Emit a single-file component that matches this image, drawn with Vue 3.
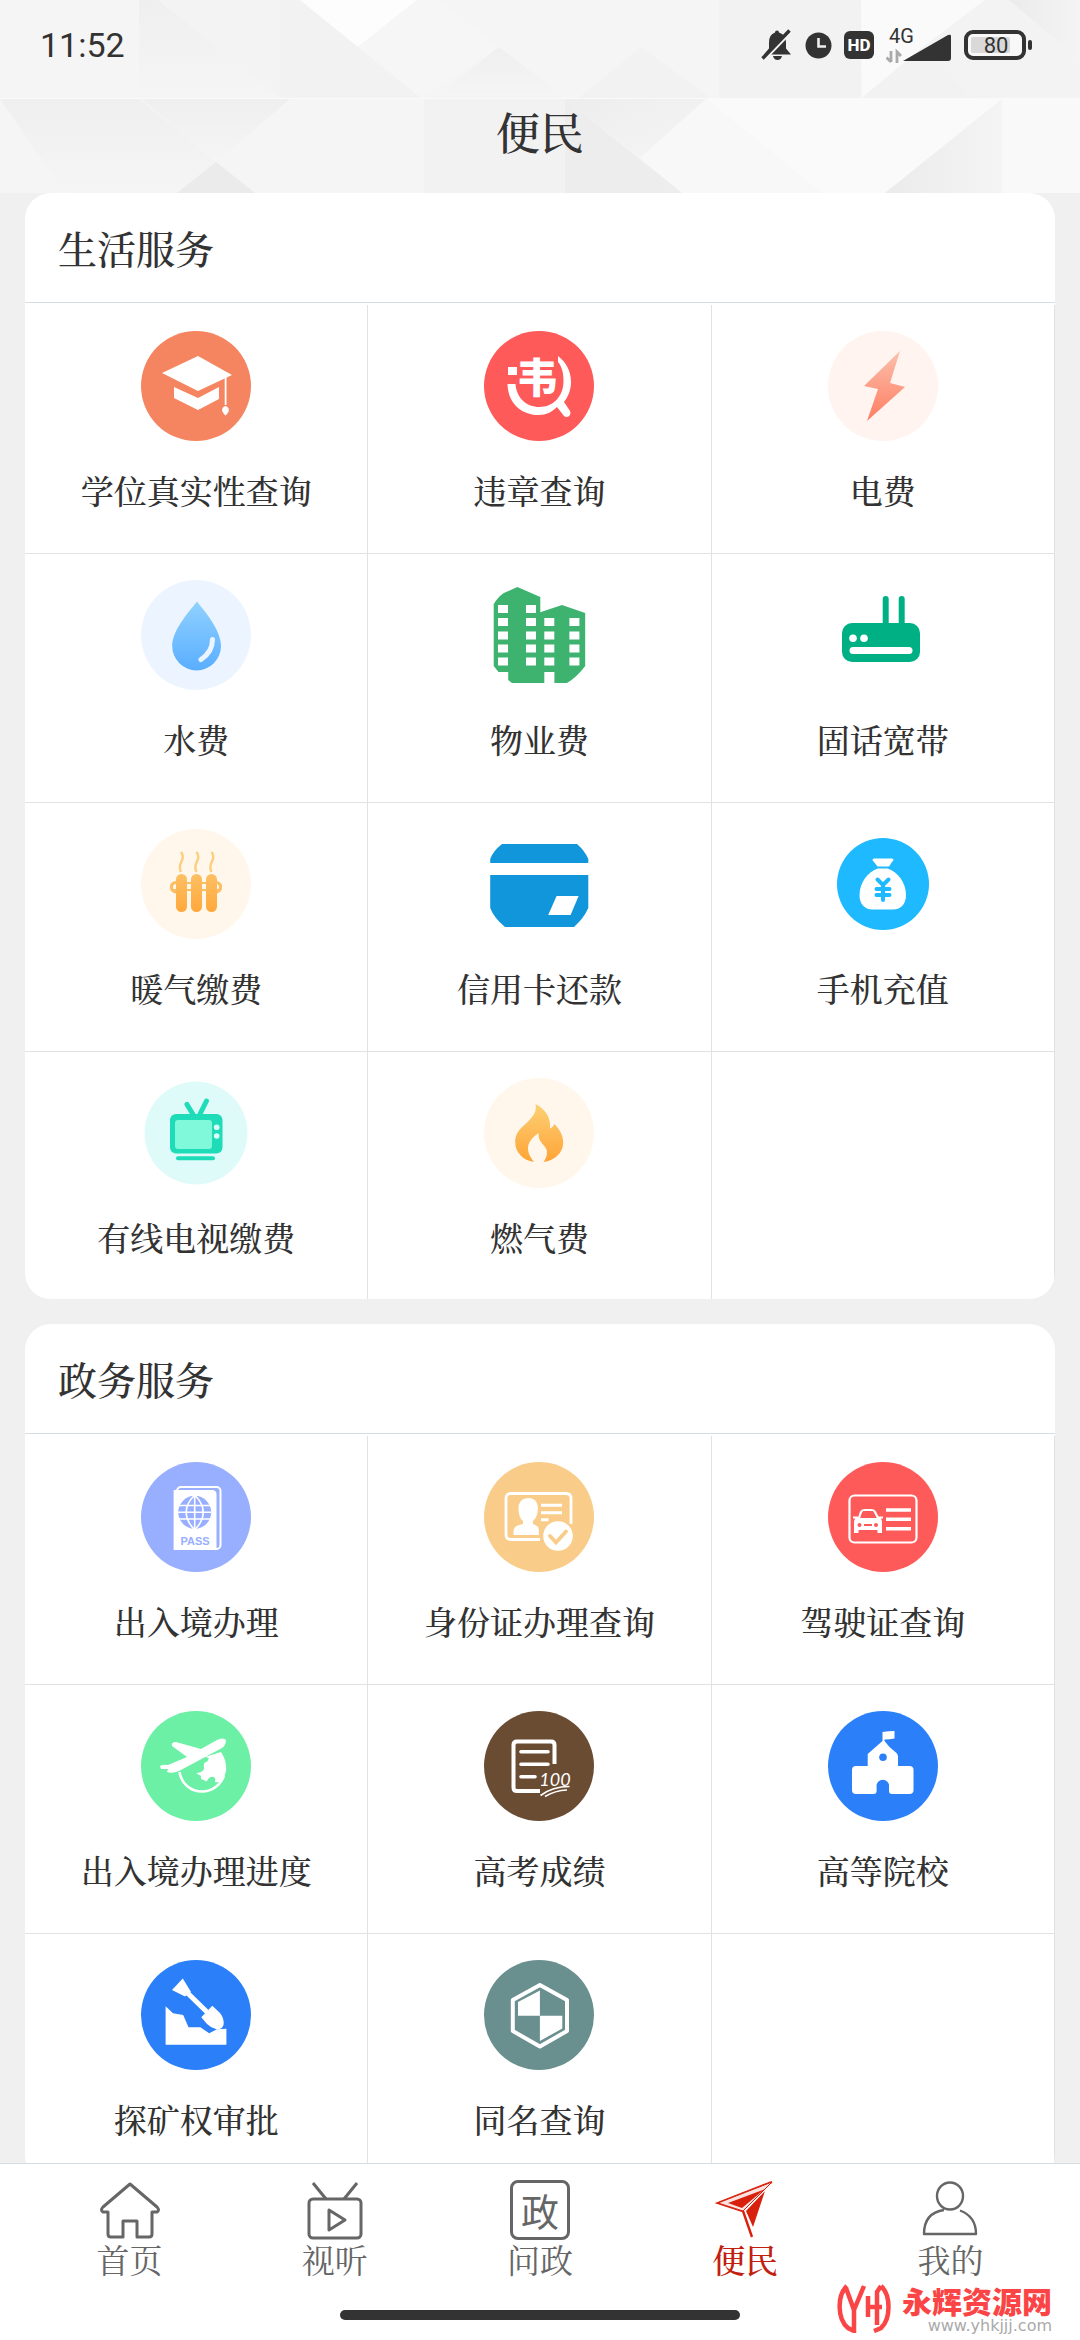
<script setup>
const icons = {
  degree: `<circle cx="55" cy="55" r="55" fill="#f58560"/><g fill="#fff"><path d="M57 25L91 44L57 60L21 42Z"/><path d="M33 56L57 67L78 56V68L57 79L33 67Z"/><path d="M83.700 45h1.800v29h-1.800z"/><path d="M84.500 75c5 2 4 6 0 9.500c-4-3.500-5-7.500 0-9.500z"/></g>`,
  traffic: `<circle cx="55" cy="55" r="55" fill="#ff5a5a"/><text x="53" y="62" text-anchor="middle" font-size="41" font-weight="900" fill="#fff" font-family="'Noto Sans CJK SC',sans-serif">韦</text><rect x="24" y="36" width="9" height="8" fill="#fff"/><path d="M23.500 53h8c1 14 11 23 24 23c14 0 24-11 24-26c0-9-2-15-5.500-19V25c8 6 13 15 13 26c0 8-3 15-7 20l6 9c2 4-3 8-6 5l-7-9c-5 5-11 8-18 8c-18 0-31-12-31.500-31z" fill="#fff"/>`,
  power: `<defs><linearGradient id="bolt" x2="0" y2="1"><stop stop-color="#fbc0ac"/><stop offset="1" stop-color="#ff7d63"/></linearGradient></defs><circle cx="55" cy="55" r="55" fill="#fff4ef"/><path d="M72 20L62 52L77 56L39 90L50 58L36 55Z" fill="url(#bolt)"/>`,
  water: `<defs><linearGradient id="drop" x2="0" y2="1"><stop stop-color="#90d1ff"/><stop offset="1" stop-color="#5aaeff"/></linearGradient></defs><circle cx="55" cy="55" r="55" fill="#ecf5ff"/><path d="M56 21.500C66 34 80 51 80 66a24.400 24.400 0 0 1-48.800 0C31.200 51 46 34 56 21.500z" fill="url(#drop)"/><path d="M71.500 59.500c0 9-4 15-11.500 20" fill="none" stroke="#ecf5ff" stroke-width="5" stroke-linecap="round"/>`,
  estate: `<path fill="#3eb370" d="M33.400 7L56.300 17V32.300L78 25L101.200 33V86Q93 97 83 103H70.400V92H60.300V103H28L24.200 100V92H14.500L9.700 86V24.300Q13 18 19.400 13.300z"/><g fill="#fff"><path d="M14 25h10v8H14zm0 13h10v8H14zm0 13.500h10v8H14zm0 13h10v8H14zm0 13h10v8H14zM42 25h10v8H42zm0 13h10v8H42zm0 13.500h10v8H42zm0 13h10v8H42zm0 13h10v8H42zM60.300 38h10v8h-10zm0 13.500h10v8h-10zm0 13h10v8h-10zm0 13h10v8h-10zM85.400 38h10v8h-10zm0 13.500h10v8h-10zm0 13h10v8h-10zm0 13h10v8h-10z"/></g>`,
  router: `<g fill="#00b085"><rect x="14" y="43" width="78" height="39" rx="10"/><rect x="54.700" y="16" width="6" height="32" rx="3"/><rect x="70.700" y="16" width="6" height="32" rx="3"/></g><g fill="#fff"><circle cx="25" cy="58.300" r="3.800"/><circle cx="36" cy="58.300" r="3.800"/><rect x="21.500" y="67" width="63" height="7" rx="3.500"/></g>`,
  heating: `<defs><linearGradient id="heat" x2="0" y2="1"><stop stop-color="#fdc063"/><stop offset="1" stop-color="#ffa83c"/></linearGradient></defs><circle cx="55" cy="55" r="55" fill="#fff7ec"/><rect x="30" y="54" width="50" height="7" rx="3.500" fill="none" stroke="#fdbd62" stroke-width="2"/><g fill="none" stroke="#fdbd62" stroke-width="3"><path d="M35 53.500c-6 0-6 9.500 0 9.500M75 53.500c6 0 6 9.500 0 9.500"/></g><g fill="url(#heat)"><rect x="35" y="45" width="11" height="38" rx="5.500"/><rect x="50" y="45" width="11" height="38" rx="5.500"/><rect x="65" y="45" width="11" height="38" rx="5.500"/></g><path d="M40 23c6 8-5 11 0 20M55.500 23c6 8-5 11 0 20M70.500 23c6 8-5 11 0 20" fill="none" stroke="#fbcf7f" stroke-width="2.500"/>`,
  card: `<g fill="#1296db"><path d="M18 15H93Q101 22 104.300 30V34H6.200V30Q9 22 18 15z"/><path d="M6.200 46H104.300V79Q100 89 90 98H21Q10 89 6.200 79z"/></g><path d="M72.600 67h22l-8 19h-22.400z" fill="#fff"/>`,
  recharge: `<circle cx="55" cy="55" r="46" fill="#1eb9ff"/><g fill="#fff"><path d="M46 29.500h18q3 1 0 3.500l-3 4.500H49.500l-3.500-4.500q-3-2.500 0-3.500z"/><path d="M50 39.500h9.500c10 3 18.500 14 18.500 26.500c0 10-6 14.500-13 14.500H44.500c-7 0-13-4.500-13-14.500c0-12.500 8.500-23.500 18.500-26.500z"/></g><path d="M49.500 50.500l5.500 5.500l5.500-5.500M55 56.500V71M48.500 60h13M48.500 66h13" fill="none" stroke="#1eb9ff" stroke-width="4" stroke-linecap="round"/>`,
  tv: `<circle cx="55" cy="55" r="51.500" fill="#dffbf9"/><path d="M46 26.500L53 38M65.500 23L58 38" stroke="#1fdcb9" stroke-width="5" stroke-linecap="round"/><rect x="29" y="36" width="52.500" height="39.500" rx="6" fill="#1fdcb9"/><rect x="34" y="42" width="37" height="29" rx="3" fill="#80f8da"/><g fill="#dffbf9"><circle cx="75.700" cy="49.300" r="2.800"/><circle cx="75.700" cy="58" r="2.800"/></g><rect x="35" y="78.300" width="39" height="4" rx="2" fill="#1fdcb9"/>`,
  gas: `<defs><linearGradient id="fire" x2="0" y2="1"><stop stop-color="#fcd075"/><stop offset="1" stop-color="#ffa437"/></linearGradient></defs><circle cx="55" cy="55" r="55" fill="#fff7ec"/><path d="M51.500 26C61 31 67 39 66 50.500C68 49.500 69.500 48 70.400 46C77 53 79.500 59 79.200 66C78.500 75 70 83 59.500 84C63 79 63.500 75 62.500 71.500C60 66 54 64 54.600 55.300C48 59 44 65 44 70.300C44 76 47 80 50 84C39 82.500 31 74 31.200 64C31 55 37 50 42.500 45C50 38 53 33 51.500 26z" fill="url(#fire)"/>`,
  passport: `<circle cx="55" cy="55" r="55" fill="#98aeff"/><rect x="36" y="25" width="43.500" height="62" rx="4" fill="none" stroke="#fff" stroke-width="2"/><path d="M32.600 28H71q4.500 0 4.500 4.500V88H32.600z" fill="#fff"/><circle cx="53.700" cy="50.300" r="16.500" fill="#98aeff"/><path d="M37 43.500h33M37 50.300h33M37 57h33M53.700 33v35M53.700 33q-17 17 0 35M53.700 33q17 17 0 35" fill="none" stroke="#fff" stroke-width="1.600"/><text x="54" y="82.500" text-anchor="middle" font-size="11" font-weight="700" fill="#98aeff" font-family="'Liberation Sans',sans-serif">PASS</text>`,
  idcard: `<circle cx="55" cy="55" r="55" fill="#f9cd89"/><path d="M56 77.500H27q-5 0-5-5V36.500q0-5 5-5H82q5 0 5 5V62" fill="none" stroke="#fff" stroke-width="2.800"/><g fill="#fff"><path d="M44.400 36c6 0 9.500 4 9.500 10c0 6-2 11-5 13v3c5 2 6 3 6 7v4H29.500c0-7 0-9 9.500-11v-3c-3-2-4.500-7-4.500-13c0-6 4-10 9.900-10z"/><circle cx="74" cy="74" r="14.800"/></g><path d="M57 43.300h21M57 50.700h21M57 57.700h7.500" stroke="#fff" stroke-width="3"/><path d="M66 74l6 6.500l10-11" fill="none" stroke="#f9cd89" stroke-width="3.800" stroke-linecap="round"/>`,
  license: `<circle cx="55" cy="55" r="55" fill="#ff5a5a"/><rect x="21.500" y="33.500" width="67" height="47" rx="5" fill="none" stroke="#fff" stroke-width="2.200"/><path d="M58 48h25M58 57.300h25M58 66.700h25" stroke="#fff" stroke-width="3.600"/><path d="M31 56l2-6q1-2 3-2h8q2 0 3 2l3 6" fill="none" stroke="#fff" stroke-width="2.200"/><path d="M25 54.500h5v1.500h20v-1.500h5v2h-2l1 3V71h-4.500v-3h-19v3H26V59.500l1-3h-2z" fill="#fff"/><g fill="#ff5a5a"><circle cx="31.500" cy="63" r="2"/><circle cx="48" cy="63" r="2"/><rect x="36" y="62" width="8" height="2"/></g>`,
  exit: `<circle cx="55" cy="55" r="55" fill="#6cf0a5"/><g fill="#fff"><path d="M20 58l-1-3q3-2 8-1l19-8L31 35q-1-4 4-4l25 7l16-9q6-3 9 0q0 5-4 8L38 60q-7 3-12 1l1-3z"/><path d="M80 41q6 9 5 19q-3 13-11 11q1-5-2-5q-2-1-5 2q-1 4-4 1q-4 0-3-4l-5-3q6 0 8-4q-1-8 3-7l2-4l-4-1z"/></g><path d="M38.500 61c2 12 11 19.500 23 19.500c9 0 18-6 21.500-16" fill="none" stroke="#fff" stroke-width="2.600"/>`,
  exam: `<circle cx="55" cy="55" r="55" fill="#6a4c33"/><path d="M56 80H33q-3.500 0-3.500-3.500V34q0-3.500 3.500-3.500h34q3.500 0 3.500 3.500V53" fill="none" stroke="#fff" stroke-width="4"/><path d="M37 40.700h27M37 53.300h27M37 65.700h14" stroke="#fff" stroke-width="3.600" stroke-linecap="round"/><text x="71" y="75" text-anchor="middle" font-size="18" font-style="italic" fill="#fff" font-family="Lato,sans-serif">100</text><path d="M56.500 84.500q12-9 29-9M61 85.500q10-6 22-6.500" fill="none" stroke="#fff" stroke-width="1.600"/>`,
  school: `<circle cx="55" cy="55" r="55" fill="#2b80fa"/><path fill="#fff" d="M54.500 21q6-1 12-1v7.500q-5 1-10 1V30l5 6l7 6q1.500 1.500 1.500 3.500v9.500h11.500q4 0 4 4v20q0 4-4 4H64q-3 0-3-3v-5a6.200 6.200 0 0 0-12.400 0v5q0 3-3 3H28q-4 0-4-4V59q0-4 4-4h11.700V43l14.800-13z"/><circle cx="55" cy="46.300" r="3.800" fill="#2b80fa"/>`,
  mining: `<circle cx="55" cy="55" r="55" fill="#2b80fa"/><g fill="#fff"><path d="M41.800 18.500L50 32L44 36.500L31 30z"/><path d="M71.300 45.700L79 53Q83 58 82.700 64Q82 69 76 69.500Q70 68 66 64L60.300 57.300z"/><path d="M24.600 46.300L32 53.300L42.200 55L47.500 67.300H59.400L68.200 73.300L76 69.300L85.400 68.700V84.700H24.600z"/></g><path d="M46 32.500L67 53" stroke="#fff" stroke-width="5"/>`,
  sameName: `<circle cx="55" cy="55" r="55" fill="#6a8f8f"/><path d="M55.900 25L83 40V71L55.900 86.500L28.800 71V40z" fill="none" stroke="#fff" stroke-width="4" stroke-linejoin="round"/><path d="M34 42L55.900 30.500V55.700H34zM55.900 55.700H78.300V68.500L55.900 81z" fill="#fff"/>`
}

const sections = [
  {
    title: '生活服务',
    items: [
      { name: '学位真实性查询', icon: 'degree' },
      { name: '违章查询', icon: 'traffic' },
      { name: '电费', icon: 'power' },
      { name: '水费', icon: 'water' },
      { name: '物业费', icon: 'estate' },
      { name: '固话宽带', icon: 'router' },
      { name: '暖气缴费', icon: 'heating' },
      { name: '信用卡还款', icon: 'card' },
      { name: '手机充值', icon: 'recharge' },
      { name: '有线电视缴费', icon: 'tv' },
      { name: '燃气费', icon: 'gas' }
    ]
  },
  {
    title: '政务服务',
    items: [
      { name: '出入境办理', icon: 'passport' },
      { name: '身份证办理查询', icon: 'idcard' },
      { name: '驾驶证查询', icon: 'license' },
      { name: '出入境办理进度', icon: 'exit' },
      { name: '高考成绩', icon: 'exam' },
      { name: '高等院校', icon: 'school' },
      { name: '探矿权审批', icon: 'mining' },
      { name: '同名查询', icon: 'sameName' }
    ]
  }
]
</script>

<template>
  <div class="app">
    <header class="header">
      <svg class="facets" viewBox="0 0 1080 193" preserveAspectRatio="none" aria-hidden="true">
        <defs>
          <linearGradient id="fade" x1="0" y1="0" x2="1" y2="1">
            <stop offset="0" stop-color="#ededed" /><stop offset="1" stop-color="#f5f5f5" />
          </linearGradient>
          <linearGradient id="rise" x1="0" y1="0" x2="0" y2="1">
            <stop offset="0" stop-color="#efefef" /><stop offset="1" stop-color="#f5f5f5" />
          </linearGradient>
          <linearGradient id="edge" x1="0" y1="0" x2="1" y2="0">
            <stop offset="0" stop-color="#ebebeb" /><stop offset="1" stop-color="#f4f4f4" />
          </linearGradient>
        </defs>
        <rect width="1080" height="193" fill="#f5f5f5" />
        <path d="M139 0H158L282 98H139z" fill="url(#rise)" />
        <path d="M158 0H281V98z" fill="#f3f3f3" />
        <path d="M281 0H300L421 98H281z" fill="#f2f2f2" />
        <path d="M300 0H417L358 47z" fill="#fdfdfd" />
        <path d="M417 0L358 47L421 98L499 47L440 0z" fill="#f6f6f6" />
        <path d="M499 47L565 98H434z" fill="url(#rise)" />
        <path d="M641 47L710 98H579z" fill="#f2f2f2" />
        <path d="M719 0H861V98H719z" fill="#f2f2f2" />
        <path d="M861 0H985L923 47L862 98z" fill="#fafafa" />
        <path d="M923 47L972 98H862z" fill="#f2f2f2" />
        <path d="M985 0H1009L1080 60V98H972L923 47z" fill="#f3f3f3" />
        <path d="M1009 0H1080V60z" fill="url(#edge)" />
        <path d="M0 99H139L255 193H65z" fill="url(#rise)" />
        <path d="M141 99H290L216 162z" fill="url(#rise)" />
        <path d="M216 162L255 193H177z" fill="#ebebeb" />
        <path d="M292 99H424V193H292z" fill="#f5f5f5" />
        <path d="M424 99H565V193H424z" fill="#f2f2f2" />
        <path d="M565 99L682 193H565z" fill="#ededed" />
        <path d="M565 99H706L640 158z" fill="url(#fade)" />
        <path d="M706 99H1002L885 193H822z" fill="#fafafa" />
        <path d="M706 99L822 193H682L640 158z" fill="#f8f8f8" />
        <path d="M1002 99V193H885z" fill="url(#edge)" />
        <path d="M1002 99H1080V193H1002z" fill="#f9f9f9" />
        <path d="M0 98.500H1080" stroke="#fafafa" />
      </svg>
      <div class="status">
        <time class="clock">11:52</time>
        <div class="indicators">
          <svg width="32" height="32" viewBox="0 0 32 32" aria-label="静音">
            <path d="M16 1.500q2 0 2 2q7 2 7 10v6l5 6H3l5-6v-6q0-8 6-10q0-2 2-2z" fill="#333" />
            <path d="M12 27h9q-1 4-4.500 4T12 27z" fill="#333" />
            <path d="M3 31L30 3" stroke="#f5f5f5" stroke-width="3" />
            <path d="M1.500 29.500L28.500 1.500" stroke="#333" stroke-width="3.500" />
          </svg>
          <svg width="27" height="27" viewBox="0 0 27 27" aria-label="闹钟">
            <circle cx="13.500" cy="13.500" r="13" fill="#333" />
            <path d="M13.500 6v8.500h7.500" fill="none" stroke="#eee" stroke-width="2.600" />
          </svg>
          <span class="hd">HD</span>
          <svg width="66" height="44" viewBox="0 -4 66 44" aria-label="移动信号">
            <text x="3" y="16" font-size="20" fill="#333">4G</text>
            <path d="M62 8q3-1 3 1v22q0 3-3 3H17z" fill="#333" />
            <path d="M5 24v11M0.500 30.500L5 35M11 36V25l4 4" fill="none" stroke="#aaa" stroke-width="2.800" />
          </svg>
          <svg width="68" height="30" viewBox="0 0 68 30" aria-label="电量 80%">
            <rect x="2" y="2" width="58" height="26" rx="7" fill="#f8f8f8" stroke="#333" stroke-width="4" />
            <rect x="7" y="7" width="39" height="16" rx="2" fill="#d9d9d9" />
            <rect x="64" y="10" width="4" height="10" rx="2" fill="#333" />
            <text x="32" y="23" text-anchor="middle" font-size="22" fill="#333">80</text>
          </svg>
        </div>
      </div>
      <h1 class="title">便民</h1>
    </header>

    <main class="content">
      <section v-for="section in sections" :key="section.title" class="panel">
        <h2 class="panel-title">{{ section.title }}</h2>
        <div class="grid">
          <a v-for="item in section.items" :key="item.name" href="#" class="cell">
            <svg class="cell-icon" viewBox="0 0 110 110" aria-hidden="true" v-html="icons[item.icon]"></svg>
            <span class="cell-name">{{ item.name }}</span>
          </a>
          <div class="cell"></div>
        </div>
      </section>
    </main>

    <footer class="footer">
      <nav class="tabs">
        <a href="#" class="tab">
          <svg class="tab-icon" viewBox="0 0 60 60" fill="none" stroke="currentColor" stroke-width="3" stroke-linejoin="round">
            <path d="M30 4L3 27q-3 3 0 5h5v22q0 3 3 3h12V41h14v16h12q3 0 3-3V32h5q3-2 0-5z" />
          </svg>
          首页
        </a>
        <a href="#" class="tab">
          <svg class="tab-icon" viewBox="0 0 60 60" fill="none" stroke="currentColor" stroke-width="3" stroke-linejoin="round">
            <rect x="4" y="19" width="52" height="39" rx="4" />
            <path d="M8 3L21 19M52 3L39 19M24 30v20l16-10z" />
          </svg>
          视听
        </a>
        <a href="#" class="tab">
          <span class="tab-icon boxed">政</span>
          问政
        </a>
        <a href="#" class="tab active" aria-current="page">
          <svg class="tab-icon" viewBox="0 0 60 60">
            <path d="M57 2L3 23L28 31L37 57" fill="none" stroke="#d9200d" stroke-width="2.400" />
            <path d="M57 2L3 23L28 31z" fill="#fbe2df" stroke="#d9200d" stroke-width="1" />
            <path d="M50 9L13 23L27 28z" fill="#d9200d" />
            <path d="M50 11L31 31L38 47z" fill="#d9200d" />
          </svg>
          便民
        </a>
        <a href="#" class="tab">
          <svg class="tab-icon" viewBox="0 0 60 60" fill="none" stroke="currentColor" stroke-width="2.400" stroke-linejoin="round">
            <ellipse cx="30" cy="16" rx="13" ry="13.500" />
            <path d="M24 30C10 32 4 41 4 54h52c0-11-4-19-16-23.500" />
          </svg>
          我的
        </a>
      </nav>
      <div class="home-bar"></div>
      <div class="watermark">
        <svg width="56" height="50" viewBox="0 0 56 50" fill="none" stroke="#fb4445" stroke-width="4.500" aria-label="YH">
          <path d="M11 3C1 12 1 36 12 45L18 48V27L10 5M18 27L28 3" />
          <path d="M45 3C55 12 55 36 45 45L38 48M32 13V34M32 24H46M45 3L41 9V42" />
        </svg>
        <div class="watermark-text">
          <strong>永辉资源网</strong>
          <small>www.yhkjjj.com</small>
        </div>
      </div>
    </footer>
  </div>
</template>

<style>
body {
  background: #f0f0f0;
}
</style>

<style scoped>
.app {
  display: flex;
  flex-direction: column;
  height: 100vh;
  overflow: hidden;
  background: #f0f0f0;
  color: #333;
  font-family: "Noto Serif CJK SC", "Source Han Serif SC", "Noto Serif SC", "Noto Sans CJK SC", serif;
}

.header {
  position: relative;
  flex: none;
  height: 193px;
}

.facets {
  position: absolute;
  inset: 0;
  width: 100%;
  height: 100%;
}

.status {
  position: relative;
  display: flex;
  align-items: center;
  justify-content: space-between;
  height: 90px;
  padding: 0 48px 0 40px;
  font-family: Roboto, "Noto Sans", sans-serif;
}

.clock {
  font-size: 34px;
  font-weight: 400;
}

.indicators {
  display: flex;
  align-items: center;
  gap: 12px;
}

.hd {
  width: 30px;
  border-radius: 6px;
  background: #333;
  color: #fff;
  font-size: 17px;
  font-weight: 800;
  line-height: 28px;
  text-align: center;
}

.title {
  position: relative;
  margin: 0;
  font-size: 44px;
  font-weight: 500;
  line-height: 82px;
  text-align: center;
}

.content {
  flex: 1;
  min-height: 0;
  overflow: hidden;
  padding: 0 25px;
}

.panel {
  margin-bottom: 25px;
  border-radius: 26px;
  background: #fff;
  overflow: hidden;
}

.panel-title {
  margin: 0;
  padding: 0 33px;
  border-bottom: 1px solid #d6dde2;
  font-size: 39px;
  font-weight: 500;
  line-height: 109px;
}

.grid {
  display: grid;
  grid-template-columns: repeat(3, 1fr);
  padding-top: 2px;
}

.cell {
  display: flex;
  flex-direction: column;
  align-items: center;
  gap: 25px;
  box-sizing: border-box;
  min-height: 249px;
  padding-top: 26px;
  border-right: 1px solid #e0e2e4;
  border-bottom: 1px solid #e0e2e4;
  color: #333;
  text-decoration: none;
}

.cell:nth-child(3n + 1):nth-last-child(-n + 3),
.cell:nth-child(3n + 1):nth-last-child(-n + 3) ~ .cell {
  min-height: 247px;
  border-bottom: 0;
}

.cell-icon {
  width: 110px;
  height: 110px;
}

.cell-name {
  font-size: 33px;
  font-weight: 500;
  line-height: 48px;
}

.footer {
  position: relative;
  flex: none;
  border-top: 1px solid #d6dde2;
  background: #fff;
}

.tabs {
  display: flex;
  padding: 16px 27px 32px;
}

.tab {
  display: flex;
  flex: 1;
  flex-direction: column;
  align-items: center;
  color: #666;
  font-size: 33px;
  line-height: 38px;
  text-decoration: none;
}

.tab.active {
  color: #c21f10;
  font-weight: 500;
}

.tab-icon {
  width: 60px;
  height: 60px;
}

.boxed {
  box-sizing: border-box;
  border: 3px solid #666;
  border-radius: 8px;
  font-family: "Noto Sans CJK SC", sans-serif;
  font-size: 38px;
  line-height: 54px;
  text-align: center;
}

.home-bar {
  width: 37%;
  height: 10px;
  margin: 0 auto 20px;
  border-radius: 5px;
  background: #333;
}

.watermark {
  position: absolute;
  right: 28px;
  bottom: 6px;
  display: flex;
  align-items: center;
  gap: 10px;
}

.watermark-text {
  display: flex;
  flex-direction: column;
  font-family: "Noto Sans CJK SC", sans-serif;
}

.watermark-text strong {
  color: #fb4445;
  font-size: 30px;
  font-weight: 900;
  line-height: 36px;
}

.watermark-text small {
  color: #aaa;
  font-family: "DejaVu Sans", sans-serif;
  font-size: 16px;
  line-height: 16px;
  text-align: right;
}
</style>
